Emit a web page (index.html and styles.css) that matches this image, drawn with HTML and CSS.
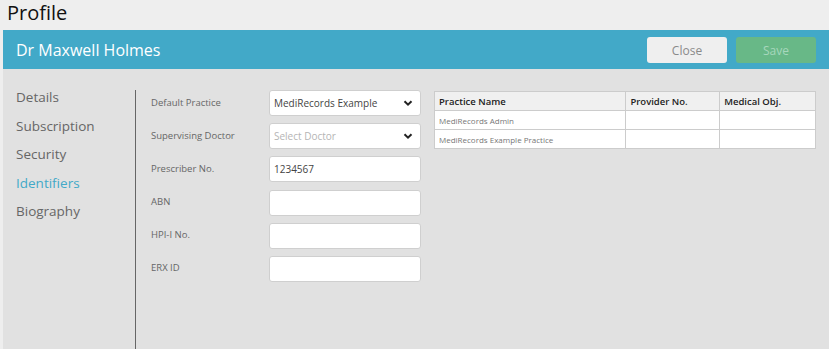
FILE: index.html
```html
<!DOCTYPE html>
<html>
<head>
<meta charset="utf-8">
<link rel="stylesheet" href="styles.css">
</head>
<body>
<div class="page">
  <h1 class="page-title">Profile</h1>
  <div class="panel">
    <div class="panel-bar">
      <div class="panel-name">Dr Maxwell Holmes</div>
      <div class="panel-actions">
        <button class="btn btn-close">Close</button>
        <button class="btn btn-save">Save</button>
      </div>
    </div>
    <div class="panel-body">
      <nav class="side-nav">
        <div class="nav-item">Details</div>
        <div class="nav-item">Subscription</div>
        <div class="nav-item">Security</div>
        <div class="nav-item active">Identifiers</div>
        <div class="nav-item">Biography</div>
      </nav>
      <div class="content">
        <div class="form">
          <div class="form-row">
            <label class="form-label">Default Practice</label>
            <div class="field select">
              <span class="field-value">MediRecords Example</span>
              <svg class="chev" width="10" height="8" viewBox="0 0 10 8"><path d="M1.5 2.2 L5 5.7 L8.5 2.2" fill="none" stroke="#222" stroke-width="2"/></svg>
            </div>
          </div>
          <div class="form-row">
            <label class="form-label">Supervising Doctor</label>
            <div class="field select">
              <span class="field-value placeholder">Select Doctor</span>
              <svg class="chev" width="10" height="8" viewBox="0 0 10 8"><path d="M1.5 2.2 L5 5.7 L8.5 2.2" fill="none" stroke="#222" stroke-width="2"/></svg>
            </div>
          </div>
          <div class="form-row">
            <label class="form-label">Prescriber No.</label>
            <div class="field"><span class="field-value">1234567</span></div>
          </div>
          <div class="form-row">
            <label class="form-label">ABN</label>
            <div class="field"></div>
          </div>
          <div class="form-row">
            <label class="form-label">HPI-I No.</label>
            <div class="field"></div>
          </div>
          <div class="form-row">
            <label class="form-label">ERX ID</label>
            <div class="field"></div>
          </div>
        </div>
        <table class="grid">
          <thead>
            <tr><th class="c1">Practice Name</th><th class="c2">Provider No.</th><th class="c3">Medical Obj.</th></tr>
          </thead>
          <tbody>
            <tr><td>MediRecords Admin</td><td></td><td></td></tr>
            <tr><td>MediRecords Example Practice</td><td></td><td></td></tr>
          </tbody>
        </table>
      </div>
    </div>
  </div>
</div>
</body>
</html>
```

FILE: styles.css
```css
* { box-sizing: border-box; }
html, body { margin: 0; padding: 0; }
body {
  background: #eeeeee;
  font-family: "Open Sans", "Liberation Sans", sans-serif;
  width: 829px;
  height: 349px;
  overflow: hidden;
}
.page { height: 349px; display: flex; flex-direction: column; }
.page-title {
  margin: 0;
  height: 30px;
  padding-left: 7px;
  font-size: 20px;
  font-weight: 400;
  line-height: 25px;
  color: #111;
}
.panel {
  margin-left: 3px;
  flex: 1;
  display: flex;
  flex-direction: column;
  background: #e1e1e1;
}
.panel-bar {
  height: 39px;
  background: #42a9c8;
  display: flex;
  align-items: center;
  justify-content: space-between;
  padding: 0 13px 0 13px;
}
.panel-name {
  color: #fff;
  font-size: 16px;
  line-height: 20px;
}
.panel-actions { display: flex; gap: 9px; padding-top: 1px; }
.btn {
  width: 80px;
  height: 26px;
  border: none;
  border-radius: 3px;
  font-family: "Open Sans", "Liberation Sans", sans-serif;
  font-size: 12px;
  padding: 0;
}
.btn-close { background: #efefef; color: #8a8a8a; }
.btn-save { background: #68b887; color: #a6d7bc; }
.panel-body { flex: 1; display: flex; }
.side-nav {
  width: 133px;
  padding: 14px 0 0 13px;
  position: relative;
}
.side-nav::after {
  content: "";
  position: absolute;
  right: 0;
  top: 21px;
  bottom: 0;
  width: 1px;
  background: #666;
}
.nav-item {
  font-size: 13.5px;
  line-height: 28.5px;
  color: #666;
}
.nav-item.active { color: #42a9c8; }
.content {
  display: flex;
  padding: 21px 0 0 15px;
  gap: 13px;
  align-items: flex-start;
}
.form { width: 270px; display: flex; flex-direction: column; gap: 7.2px; }
.form-row { display: flex; align-items: center; height: 26px; }
.form-label {
  width: 118px;
  font-size: 9.5px;
  color: #666;
  margin-top: -2px;
}
.field {
  width: 152px;
  height: 26px;
  background: #fff;
  border: 1px solid #cfcfcf;
  border-radius: 3px;
  display: flex;
  align-items: center;
  justify-content: space-between;
  padding: 0 7px 0 4px;
}
.field-value { font-size: 10px; color: #444; }
.field-value.placeholder { color: #b5b5b5; }
.chev { display: block; }
.grid {
  width: 382px;
  border-collapse: collapse;
  background: #fff;
  margin-top: 1px;
}
.grid th, .grid td {
  border: 1px solid #cccccc;
  text-align: left;
  padding: 0 4px;
}
.grid th {
  background: #f0f0f0;
  font-size: 9.5px;
  font-weight: 600;
  color: #222;
  height: 19px;
}
.grid td {
  font-size: 8px;
  color: #777;
  height: 19px;
}
.grid .c1 { width: 192px; }
.grid .c2 { width: 94px; }
.grid .c3 { width: 96px; }
```
